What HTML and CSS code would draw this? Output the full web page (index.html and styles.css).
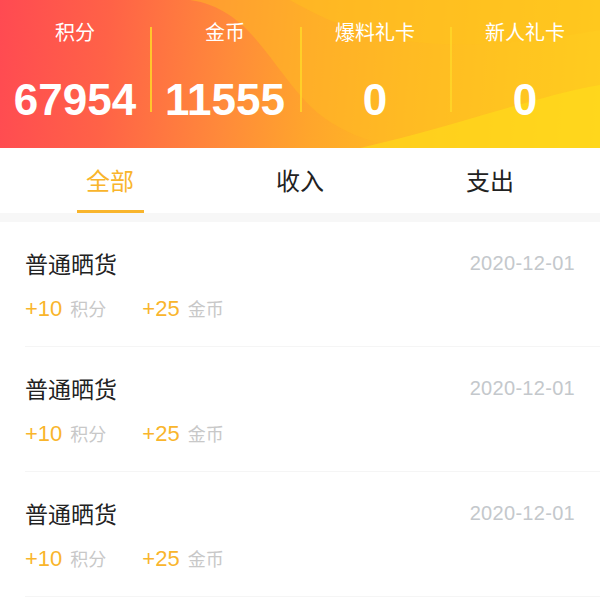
FILE: index.html
```html
<!DOCTYPE html>
<html lang="zh-cn">
<head>
	<meta charset="utf-8"/>
	<title>我的资产</title>
	<link rel="stylesheet" href="styles.css">
</head>

<body>
	<div class="header">
		<svg class="wave" width="600" height="148" viewBox="0 0 600 148" preserveAspectRatio="none">
			<path d="M190,0 C245,8 265,55 300,95 C330,132 380,148 420,148 L600,148 L600,0 Z" fill="#ffba24" opacity="0.5"/>
			<path d="M290,0 C360,40 430,60 600,30 L600,0 Z" fill="#ffc21e" opacity="0.4"/>
			<path d="M360,148 C460,125 540,95 600,85 L600,148 Z" fill="#ffe01a" opacity="0.55"/>
		</svg>
		<div class="stat">
			<div class="stat-label">积分</div>
			<div class="stat-num">67954</div>
		</div>
		<div class="stat">
			<div class="stat-label">金币</div>
			<div class="stat-num">11555</div>
		</div>
		<div class="stat">
			<div class="stat-label">爆料礼卡</div>
			<div class="stat-num">0</div>
		</div>
		<div class="stat">
			<div class="stat-label">新人礼卡</div>
			<div class="stat-num">0</div>
		</div>
	</div>

	<div class="tabs">
		<div class="tab active">全部</div>
		<div class="tab">收入</div>
		<div class="tab">支出</div>
	</div>

	<div class="list">
		<div class="item">
			<div class="item-top">
				<span class="item-title">普通晒货</span>
				<span class="item-date">2020-12-01</span>
			</div>
			<div class="item-gain">
				<span class="gain"><b>+10</b>积分</span>
				<span class="gain"><b>+25</b>金币</span>
			</div>
		</div>
		<div class="item">
			<div class="item-top">
				<span class="item-title">普通晒货</span>
				<span class="item-date">2020-12-01</span>
			</div>
			<div class="item-gain">
				<span class="gain"><b>+10</b>积分</span>
				<span class="gain"><b>+25</b>金币</span>
			</div>
		</div>
		<div class="item">
			<div class="item-top">
				<span class="item-title">普通晒货</span>
				<span class="item-date">2020-12-01</span>
			</div>
			<div class="item-gain">
				<span class="gain"><b>+10</b>积分</span>
				<span class="gain"><b>+25</b>金币</span>
			</div>
		</div>
	</div>
</body>
</html>
```

FILE: styles.css
```css
* {
	box-sizing: border-box;
}
body {
	margin: 0;
	font-family: 'Liberation Sans', 'Noto Sans CJK SC', sans-serif;
	background: #fff;
	width: 600px;
	overflow: hidden;
}
.header {
	position: relative;
	height: 148px;
	display: flex;
	background: linear-gradient(95deg, #ff4a52 0%, #ff6247 18%, #ff8a3a 38%, #ffa52c 52%, #ffbc22 68%, #ffcf1c 85%, #ffdf1a 100%);
	overflow: hidden;
}
.wave {
	position: absolute;
	left: 0;
	top: 0;
}
.stat {
	position: relative;
	flex: 1;
	text-align: center;
	color: #fff;
	padding-top: 18px;
}
.stat + .stat::before {
	content: '';
	position: absolute;
	left: 0;
	top: 27px;
	width: 2px;
	height: 85px;
	background: rgba(255, 214, 40, 0.85);
}
.stat-label {
	font-family: 'Noto Sans CJK SC', sans-serif;
	font-size: 20px;
	line-height: 28px;
}
.stat-num {
	margin-top: 29px;
	font-size: 44px;
	font-weight: bold;
	line-height: 50px;
}
.tabs {
	display: flex;
	padding: 0 15px;
	height: 65px;
	border-bottom: 9px solid #f7f7f7;
	box-sizing: content-box;
}
.tab {
	position: relative;
	flex: 1;
	text-align: center;
	font-family: 'Noto Sans CJK SC', sans-serif;
	font-size: 24px;
	line-height: 64px;
	color: #222;
}
.tab.active {
	color: #f9b52c;
}
.tab.active::after {
	content: '';
	position: absolute;
	left: 50%;
	bottom: 0;
	width: 67px;
	height: 3px;
	margin-left: -33px;
	background: #f9b52c;
}
.item {
	margin-left: 25px;
	padding: 28px 25px 25px 0;
	height: 125px;
	border-bottom: 1px solid #f5f5f5;
}
.item-top {
	display: flex;
	justify-content: space-between;
	line-height: 26px;
}
.item-title {
	font-family: 'Noto Sans CJK SC', sans-serif;
	font-size: 23px;
	color: #222;
}
.item-date {
	font-size: 20px;
	color: #c4c8cc;
	letter-spacing: 0.3px;
}
.item-gain {
	margin-top: 19px;
	line-height: 26px;
	display: flex;
	gap: 36px;
}
.gain {
	font-family: 'Noto Sans CJK SC', sans-serif;
	font-size: 18px;
	color: #c8c8c8;
}
.gain b {
	font-family: 'Liberation Sans', sans-serif;
	font-weight: normal;
	font-size: 22px;
	color: #f9b52c;
	margin-right: 8px;
}
```
